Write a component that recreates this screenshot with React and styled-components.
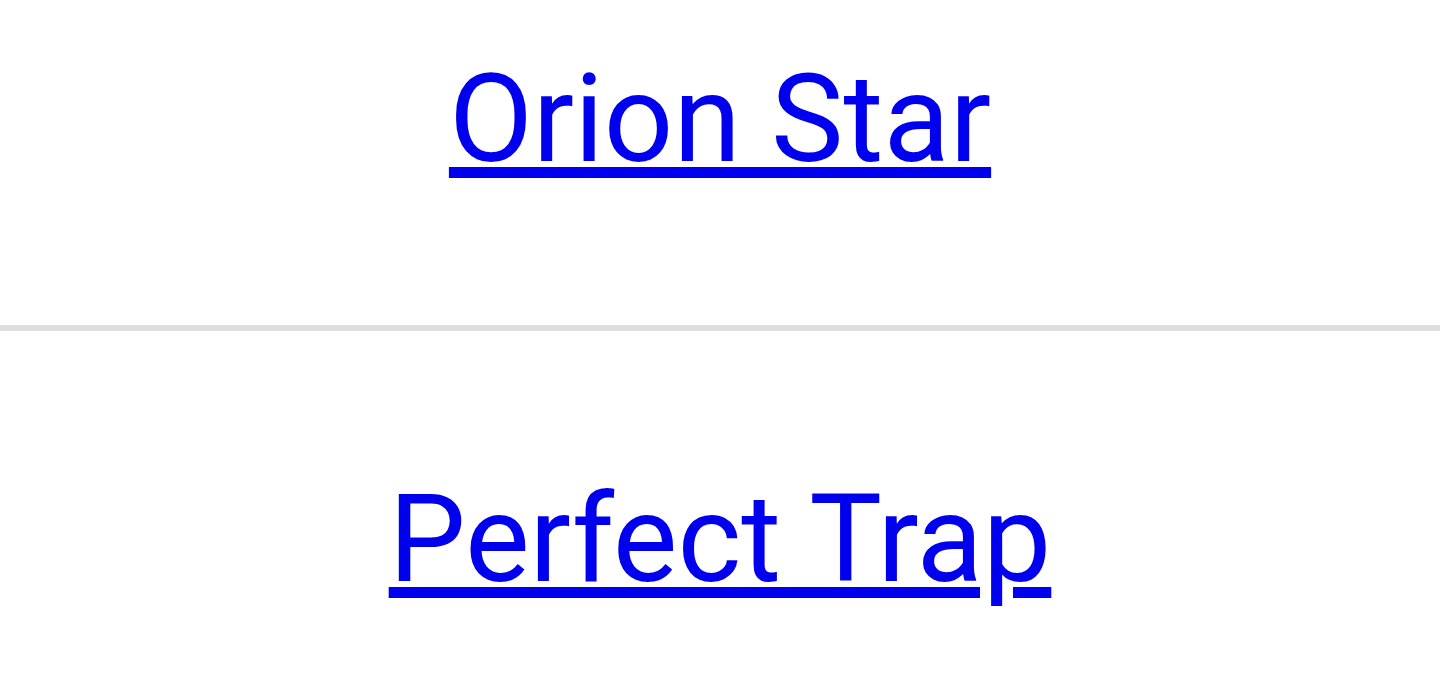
import React from 'react';
import styled, { createGlobalStyle } from 'styled-components';

const GlobalStyle = createGlobalStyle`
  html, body {
    margin: 0;
    padding: 0;
    background: #ffffff;
    overflow: hidden;
  }
`;

const Page = styled.div`
  height: 683px;
  overflow: hidden;
  font-family: Roboto, "Liberation Sans", sans-serif;
`;

// list is scrolled a little, so the first row starts above the viewport
const List = styled.ul`
  list-style: none;
  margin: -89px 0 0;
  padding: 0;
`;

const Item = styled.li`
  padding: 137px 0 134px;
  text-align: center;
  border-bottom: 6px solid #dedede;
`;

const TitleLink = styled.a`
  font-size: 122px;
  line-height: normal;
  color: #0000ee;
  text-decoration: underline;
  text-decoration-thickness: 11px;
  text-underline-offset: 6px;
`;

const titles = ['Orion Star', 'Perfect Trap'];

const App = () => (
  <Page>
    <GlobalStyle />
    <List>
      {titles.map((t) => (
        <Item key={t}>
          <TitleLink href="#">{t}</TitleLink>
        </Item>
      ))}
    </List>
  </Page>
);

export default App;
